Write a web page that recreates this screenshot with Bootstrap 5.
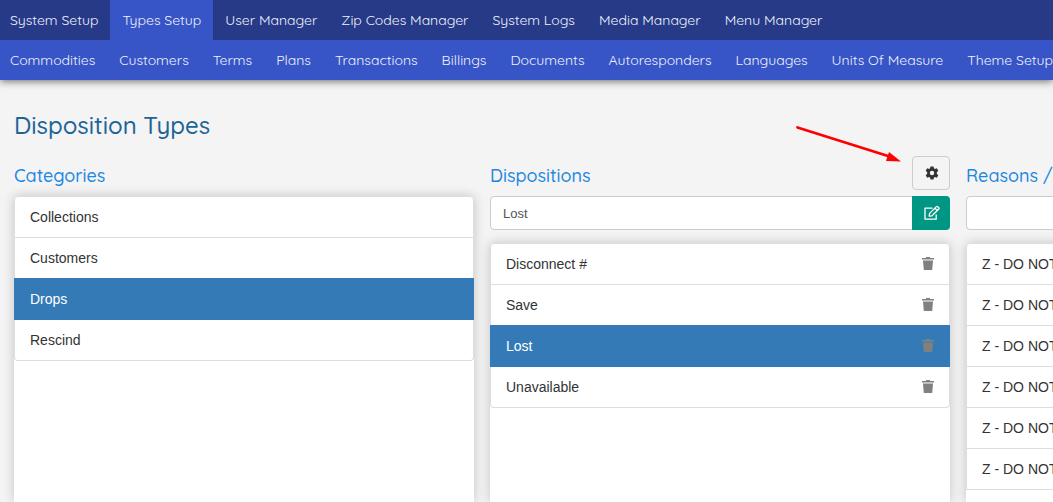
<!DOCTYPE html>
<html lang="en">
<head>
<meta charset="utf-8">
<meta name="viewport" content="width=device-width, initial-scale=1">
<title>Disposition Types</title>
<link href="https://cdn.jsdelivr.net/npm/bootstrap@5.3.0/dist/css/bootstrap.min.css" rel="stylesheet">
<style>
  body {
    --display: Quicksand, Lato, sans-serif;
    background: #f4f4f4;
    color: #333;
    font: 14px/20px "Liberation Sans", Arial, sans-serif;
  }
  .menu-bar { font: 14px/20px var(--display); background: #263a88; }
  .menu-bar .nav-link { color: #f0f2fa; padding: 10px 12px; white-space: nowrap; }
  .menu-bar .nav-item:first-child .nav-link { padding-left: 10px; }
  .menu-bar .nav-link.active, .menu-sub { background: #3755c6; }
  .page-header { box-shadow: 0 1px 8px rgba(0, 0, 0, .6); }
  .page-title { font: 500 24px/32px var(--display); color: #206496; }
  .page-body { padding: 29px 0 0 14px; }
  .columns { gap: 16px; margin-top: 15px; }
  .type-column { flex: 0 0 calc((100% - 119px) / 2); }
  .column-head { height: 40px; }
  .column-head h2 { font: 500 18px/24px var(--display); color: #1e88e0; padding-top: 8px; }
  .btn-gear { width: 38px; height: 34px; border: 1px solid #ccc; border-radius: 4px; color: #333; }
  .edit-row { margin-bottom: 13px; }
  .edit-row .form-control { height: 34px; font-size: 13px; line-height: 20px; color: #555; border-color: #ccc; border-radius: 4px; }
  .edit-row .btn { width: 38px; background: #009684; color: #fff; border: 0; border-radius: 0 4px 4px 0; }
  .panel-list { background: #fff; border-radius: 4px 4px 0 0; box-shadow: 0 0 12px rgba(0, 0, 0, .2); }
  .list-group { --bs-list-group-border-color: #ddd; --bs-list-group-color: #333; --bs-list-group-border-radius: 4px;
    --bs-list-group-active-bg: #337ab7; --bs-list-group-active-border-color: #337ab7; }
  .list-group-item { padding: 10px 15px; white-space: nowrap; }
  .list-group-item a { color: inherit; text-decoration: none; }
  .btn-trash { color: #808080; width: 12px; height: 14px; }
  .pointer { left: 75%; top: 120px; width: 120px; height: 50px; pointer-events: none; }
</style>
</head>
<body class="vh-100 overflow-hidden d-flex flex-column">
<header class="page-header">
  <nav class="menu-bar" aria-label="Main">
    <ul class="nav flex-nowrap">
      <li class="nav-item"><a class="nav-link" href="#">System Setup</a></li>
      <li class="nav-item"><a class="nav-link active" href="#">Types Setup</a></li>
      <li class="nav-item"><a class="nav-link" href="#">User Manager</a></li>
      <li class="nav-item"><a class="nav-link" href="#">Zip Codes Manager</a></li>
      <li class="nav-item"><a class="nav-link" href="#">System Logs</a></li>
      <li class="nav-item"><a class="nav-link" href="#">Media Manager</a></li>
      <li class="nav-item"><a class="nav-link" href="#">Menu Manager</a></li>
    </ul>
  </nav>
  <nav class="menu-bar menu-sub" aria-label="Types">
    <ul class="nav flex-nowrap">
      <li class="nav-item"><a class="nav-link" href="#">Commodities</a></li>
      <li class="nav-item"><a class="nav-link" href="#">Customers</a></li>
      <li class="nav-item"><a class="nav-link" href="#">Terms</a></li>
      <li class="nav-item"><a class="nav-link" href="#">Plans</a></li>
      <li class="nav-item"><a class="nav-link" href="#">Transactions</a></li>
      <li class="nav-item"><a class="nav-link" href="#">Billings</a></li>
      <li class="nav-item"><a class="nav-link" href="#">Documents</a></li>
      <li class="nav-item"><a class="nav-link" href="#">Autoresponders</a></li>
      <li class="nav-item"><a class="nav-link" href="#">Languages</a></li>
      <li class="nav-item"><a class="nav-link" href="#">Units Of Measure</a></li>
      <li class="nav-item"><a class="nav-link pe-0" href="#">Theme Setup</a></li>
    </ul>
  </nav>
</header>

<main class="page-body flex-grow-1 d-flex flex-column">
  <h1 class="page-title m-0">Disposition Types</h1>
  <div class="columns d-flex flex-grow-1">
    <section class="type-column d-flex flex-column">
      <div class="column-head"><h2 class="m-0">Categories</h2></div>
      <div class="panel-list flex-grow-1">
        <ul class="list-group">
          <li class="list-group-item"><a href="#">Collections</a></li>
          <li class="list-group-item"><a href="#">Customers</a></li>
          <li class="list-group-item active"><a href="#">Drops</a></li>
          <li class="list-group-item"><a href="#">Rescind</a></li>
        </ul>
      </div>
    </section>

    <section class="type-column d-flex flex-column">
      <div class="column-head d-flex justify-content-between">
        <h2 class="m-0">Dispositions</h2>
        <button type="button" class="btn btn-gear p-0 d-flex align-items-center justify-content-center" aria-label="Settings">
          <svg width="16" height="14" viewBox="-2 0 16 14" fill="currentColor" fill-rule="evenodd" aria-hidden="true"><path d="M5.500 0.400h3l.4 1.900 1 .6 1.900-.6 1.500 2.500-1.500 1.400v1.600l1.500 1.400-1.500 2.500-1.900-.6-1 .6-.4 1.900h-3l-.4-1.900-1-.6-1.900.6L.7 9.200l1.500-1.400V6.200L.7 4.800l1.500-2.500 1.900.6 1-.6zM7 4.800a2.200 2.200 0 1 0 0 4.400a2.200 2.200 0 1 0 0-4.400z"/></svg>
        </button>
      </div>
      <div class="edit-row input-group">
        <input type="text" class="form-control" value="Lost" aria-label="Disposition name">
        <button type="button" class="btn p-0 d-flex align-items-center justify-content-center" aria-label="Save disposition">
          <svg width="20" height="16" viewBox="-2 0 20 16" fill="none" stroke="currentColor" stroke-width="1.300" stroke-linejoin="round" aria-hidden="true"><path d="M9.500 3.200H2v11h11.200V9.500"/><path d="M6.600 8.400l6.800-6.800q.6-.6 1.200 0l1.200 1.200q.6.600 0 1.200l-6.800 6.800-2.800.4zM12 3.200l2.200 2.200"/></svg>
        </button>
      </div>
      <div class="panel-list flex-grow-1">
        <ul class="list-group">
          <li class="list-group-item d-flex justify-content-between align-items-end"><a href="#">Disconnect #</a>
            <button type="button" class="btn btn-trash border-0 p-0 d-flex mb-1" aria-label="Delete Disconnect #"><svg width="12" height="14" viewBox="0 0 12 14" fill="currentColor" aria-hidden="true"><path d="M4 1h4v1h4v1.500H0V2h4zM1 4.500h10l-.8 9.500H1.800z"/></svg></button></li>
          <li class="list-group-item d-flex justify-content-between align-items-end"><a href="#">Save</a>
            <button type="button" class="btn btn-trash border-0 p-0 d-flex mb-1" aria-label="Delete Save"><svg width="12" height="14" viewBox="0 0 12 14" fill="currentColor" aria-hidden="true"><path d="M4 1h4v1h4v1.500H0V2h4zM1 4.500h10l-.8 9.500H1.800z"/></svg></button></li>
          <li class="list-group-item active d-flex justify-content-between align-items-end"><a href="#">Lost</a>
            <button type="button" class="btn btn-trash border-0 p-0 d-flex mb-1" aria-label="Delete Lost"><svg width="12" height="14" viewBox="0 0 12 14" fill="currentColor" aria-hidden="true"><path d="M4 1h4v1h4v1.500H0V2h4zM1 4.500h10l-.8 9.500H1.800z"/></svg></button></li>
          <li class="list-group-item d-flex justify-content-between align-items-end"><a href="#">Unavailable</a>
            <button type="button" class="btn btn-trash border-0 p-0 d-flex mb-1" aria-label="Delete Unavailable"><svg width="12" height="14" viewBox="0 0 12 14" fill="currentColor" aria-hidden="true"><path d="M4 1h4v1h4v1.500H0V2h4zM1 4.500h10l-.8 9.500H1.800z"/></svg></button></li>
        </ul>
      </div>
    </section>

    <section class="type-column d-flex flex-column">
      <div class="column-head"><h2 class="m-0">Reasons /</h2></div>
      <div class="edit-row input-group">
        <input type="text" class="form-control" aria-label="Reason name">
      </div>
      <div class="panel-list flex-grow-1">
        <ul class="list-group rounded-bottom-0">
          <li class="list-group-item"><a href="#">Z - DO NOT</a></li>
          <li class="list-group-item"><a href="#">Z - DO NOT</a></li>
          <li class="list-group-item"><a href="#">Z - DO NOT</a></li>
          <li class="list-group-item"><a href="#">Z - DO NOT</a></li>
          <li class="list-group-item"><a href="#">Z - DO NOT</a></li>
          <li class="list-group-item"><a href="#">Z - DO NOT</a></li>
        </ul>
      </div>
    </section>
  </div>
</main>

<svg class="pointer position-absolute" viewBox="0 0 120 50" aria-hidden="true"><path d="M7.500 7.500L98 36" stroke="#f00" stroke-width="2.800" stroke-linecap="round"/><path d="M111 41.500L99 32l-3 9z" fill="#f00"/></svg>
<script src="https://cdn.jsdelivr.net/npm/bootstrap@5.3.0/dist/js/bootstrap.bundle.min.js"></script>
</body>
</html>
